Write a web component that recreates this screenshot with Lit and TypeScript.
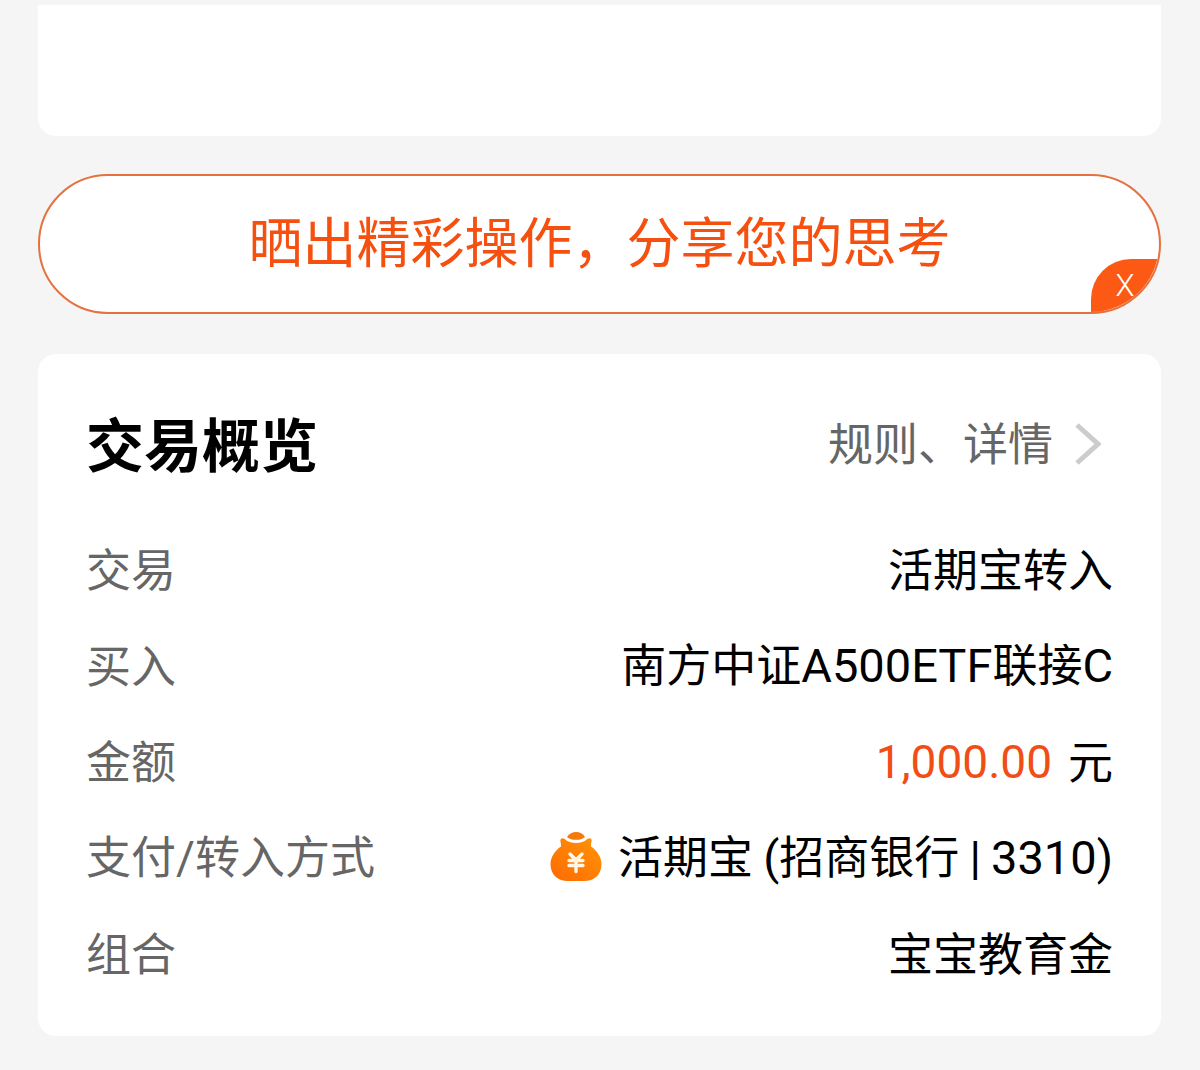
import { LitElement, html, css, svg, nothing } from "lit";
import { customElement, property } from "lit/decorators.js";

interface Row {
  label: string;
  value: string;
  unit?: string;
  bag?: boolean;
}

const ROWS: Row[] = [
  { label: "交易", value: "活期宝转入" },
  { label: "买入", value: "南方中证A500ETF联接C" },
  { label: "金额", value: "1,000.00", unit: "元" },
  { label: "支付/转入方式", value: "活期宝 (招商银行 | 3310)", bag: true },
  { label: "组合", value: "宝宝教育金" },
];

const bagIcon = html`<svg class="bag" viewBox="0 0 52 50" aria-hidden="true">
  <defs>
    <linearGradient id="bag-fill" x1="0" y1="1" x2="1" y2="0">
      <stop offset="0" stop-color="#ff6a00" />
      <stop offset="1" stop-color="#ff9408" />
    </linearGradient>
  </defs>
  ${svg`<path d="M17 5C19 1.500 22.500 0 26 0C30 0 33 1.500 35 5C31 8.800 21 8.800 17 5Z" fill="#f57a0c"/>
  <path d="M10.500 7.500C11.500 6 13.500 6 15 7.200C20 12.300 32 12.300 37 7.200C38.500 6 40.500 6 41.500 7.500C42.200 9.500 40.500 12 41 14.500C47 18.500 51.500 25 51.500 32C51.500 43 44 49 34 49H18C8 49 0.500 43 0.500 32C0.500 25 5 18.500 11 14.500C11.500 12 9.800 9.500 10.500 7.500Z" fill="url(#bag-fill)"/>
  <path d="M20 22L26 28L32 22M19 28.500H33M19 33.500H33M26 28V39.500" fill="none" stroke="#fff6e6" stroke-width="3.400" stroke-linecap="round"/>`}
</svg>`;

/** One label / value line of the overview. */
@customElement("overview-row")
export class OverviewRow extends LitElement {
  @property({ attribute: false }) row!: Row;

  static styles = css`
    :host {
      display: flex;
      align-items: center;
      justify-content: space-between;
      min-height: 96px;
      gap: 24px;
    }
    .label {
      color: #666;
    }
    .value {
      display: flex;
      align-items: center;
      justify-content: flex-end;
      gap: 16px;
      color: #000;
      text-align: right;
    }
    .amount {
      color: #f04e14;
    }
    .latin {
      font-family: Roboto, "Noto Sans CJK SC", sans-serif;
      font-size: 47px;
    }
    .amount .latin,
    .label .latin {
      font-size: 46px;
    }
    .bag {
      flex: none;
      width: 52px;
      height: 50px;
      margin-top: 2px;
    }
  `;

  private runs(text: string) {
    return text
      .split(/([A-Za-z0-9.,()/|]+)/)
      .filter(Boolean)
      .map((part) =>
        /^[A-Za-z0-9.,()/|]/.test(part) ? html`<span class="latin">${part}</span>` : part
      );
  }

  render() {
    const { label, value, unit, bag } = this.row;
    return html`
      <span class="label">${this.runs(label)}</span>
      <span class="value">
        ${bag ? bagIcon : nothing}
        <span class=${unit ? "amount" : "text"}>${this.runs(value)}</span>
        ${unit ? html`<span class="unit">${unit}</span>` : nothing}
      </span>
    `;
  }
}

@customElement("app-root")
export class AppRoot extends LitElement {
  static styles = css`
    :host {
      display: block;
      box-sizing: border-box;
      min-height: 100vh;
      padding: 5px 39px 34px 38px;
      background: #f5f5f5;
      font-family: "Noto Sans CJK SC", sans-serif;
      font-size: 45px;
      line-height: 64px;
    }
    .previous {
      height: 131px;
      border-radius: 0 0 18px 18px;
      background: #fff;
    }
    .banner {
      position: relative;
      box-sizing: border-box;
      display: flex;
      justify-content: center;
      margin: 38px 0 40px;
      padding: 24px 0 32px;
      overflow: hidden;
      border: 2px solid #e6703f;
      border-radius: 70px;
      background: #fff;
    }
    .share {
      color: #f5500f;
      font-size: 54px;
      line-height: 80px;
      text-decoration: none;
    }
    .close {
      position: absolute;
      right: 0;
      bottom: 0;
      width: 68px;
      height: 53px;
      padding: 0;
      border: 0;
      border-radius: 40px 0 0 0;
      background: #fc5a14;
      color: #fff;
      font-family: Roboto, sans-serif;
      font-size: 31px;
      font-weight: 300;
      line-height: 50px;
      cursor: pointer;
    }
    .card {
      padding: 40px 48px 36px;
      border-radius: 18px;
      background: #fff;
    }
    .head {
      display: flex;
      align-items: center;
      justify-content: space-between;
      min-height: 96px;
      margin-bottom: 30px;
    }
    .title {
      margin: 0;
      color: #000;
      font-size: 58px;
      font-weight: 700;
      line-height: 80px;
    }
    .rules {
      display: flex;
      align-items: center;
      gap: 22px;
      padding-right: 12px;
      color: #666;
      text-decoration: none;
    }
    .chevron {
      width: 26px;
      height: 42px;
      margin-top: 4px;
    }
  `;

  render() {
    return html`
      <div class="previous"></div>
      <div class="banner">
        <a class="share" href="#share">晒出精彩操作，分享您的思考</a>
        <button class="close" type="button">X</button>
      </div>
      <section class="card">
        <header class="head">
          <h2 class="title">交易概览</h2>
          <a class="rules" href="#rules">
            <span>规则、详情</span>
            <svg class="chevron" viewBox="0 0 26 42" aria-hidden="true">
              <path d="M2 2L23 21L2 40" fill="none" stroke="#ccc" stroke-width="5" />
            </svg>
          </a>
        </header>
        ${ROWS.map((row) => html`<overview-row .row=${row}></overview-row>`)}
      </section>
    `;
  }
}
